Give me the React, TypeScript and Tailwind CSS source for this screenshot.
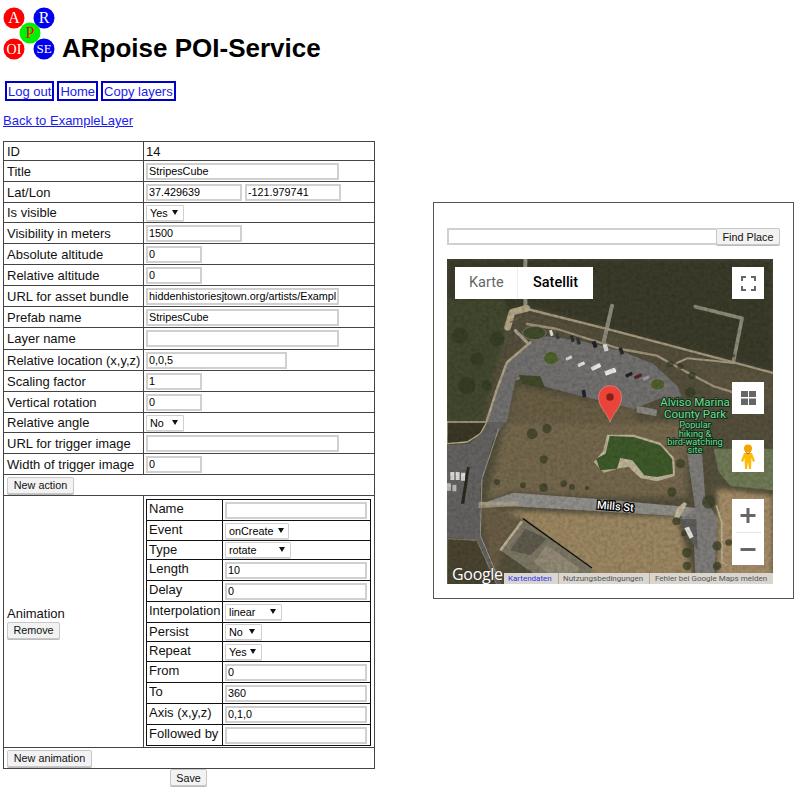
import type { ReactNode } from 'react'

const font = 'font-["Liberation_Sans",Arial,sans-serif]'

function Logo() {
  const balls = [
    { cx: 14, cy: 16, fill: '#ff0000', text: 'A', color: '#fff', size: 16 },
    { cx: 44, cy: 16, fill: '#0000ee', text: 'R', color: '#fff', size: 16 },
    { cx: 14, cy: 47, fill: '#ff0000', text: 'OI', color: '#fff', size: 14 },
    { cx: 44, cy: 47, fill: '#0000ee', text: 'SE', color: '#fff', size: 13 },
    { cx: 30, cy: 31, fill: '#00f000', text: 'P', color: '#ff0000', size: 16 },
  ]
  return (
    <svg width="61" height="60" viewBox="0 0 61 60" className="shrink-0">
      {balls.map((b) => (
        <g key={b.text}>
          <circle cx={b.cx} cy={b.cy} r="10.5" fill={b.fill} />
          <text
            x={b.cx}
            y={b.cy + b.size * 0.34}
            textAnchor="middle"
            fontSize={b.size}
            fill={b.color}
            fontFamily="'Liberation Serif', serif"
          >
            {b.text}
          </text>
        </g>
      ))}
    </svg>
  )
}

function NavBox({ label }: { label: string }) {
  return (
    <a className="h-[20px] border-2 border-[#0000cc] px-[1px] text-[13px] leading-[17px] text-[#1a1aee]">
      {label}
    </a>
  )
}

function Field({ value = '', w }: { value?: string; w: string }) {
  return (
    <input
      readOnly
      value={value}
      className={`box-border block h-[17px] border-2 border-[#d0d0d0] bg-white px-[1px] text-[10.8px] leading-[13px] text-black outline-none ${w}`}
    />
  )
}

function Sel({ value, w, arrow }: { value: string; w: string; arrow: string }) {
  return (
    <span className={`relative box-border block h-[16px] rounded-[1px] border border-[#cfcfcf] bg-white px-[3px] text-[10.8px] leading-[14px] text-black shadow-[0_1px_0_#ddd] ${w}`}>
      {value}
      <svg width="6" height="5" viewBox="0 0 6 5" className={`absolute top-[4px] ${arrow}`}>
        <path d="M0 0h6L3 5z" fill="#111" />
      </svg>
    </span>
  )
}

function Btn({ label, className = '' }: { label: string; className?: string }) {
  return (
    <button className={`box-border block h-[17px] rounded-[2px] border border-[#c8c8c8] bg-[#f2f2f2] text-[10.8px] leading-[14px] text-[#111] shadow-[0_1px_0_#bbb] ${className}`}>
      {label}
    </button>
  )
}

const mainRows: { label: string; h: string; cell: ReactNode }[] = [
  { label: 'ID', h: 'h-[19px]', cell: '14' },
  { label: 'Title', h: 'h-[21px]', cell: <Field value="StripesCube" w="w-[193px]" /> },
  {
    label: 'Lat/Lon',
    h: 'h-[21px]',
    cell: (
      <div className="flex gap-[3px]">
        <Field value="37.429639" w="w-[96px]" />
        <Field value="-121.979741" w="w-[96px]" />
      </div>
    ),
  },
  { label: 'Is visible', h: 'h-[20px]', cell: <Sel value="Yes" w="w-[38px]" arrow="right-[5px]" /> },
  { label: 'Visibility in meters', h: 'h-[21px]', cell: <Field value="1500" w="w-[96px]" /> },
  { label: 'Absolute altitude', h: 'h-[21px]', cell: <Field value="0" w="w-[56px]" /> },
  { label: 'Relative altitude', h: 'h-[21px]', cell: <Field value="0" w="w-[56px]" /> },
  { label: 'URL for asset bundle', h: 'h-[21px]', cell: <Field value="hiddenhistoriesjtown.org/artists/ExampleLayer/stripes" w="w-[193px]" /> },
  { label: 'Prefab name', h: 'h-[21px]', cell: <Field value="StripesCube" w="w-[193px]" /> },
  { label: 'Layer name', h: 'h-[22px]', cell: <Field w="w-[193px]" /> },
  { label: 'Relative location (x,y,z)', h: 'h-[21px]', cell: <Field value="0,0,5" w="w-[141px]" /> },
  { label: 'Scaling factor', h: 'h-[21px]', cell: <Field value="1" w="w-[56px]" /> },
  { label: 'Vertical rotation', h: 'h-[21px]', cell: <Field value="0" w="w-[56px]" /> },
  { label: 'Relative angle', h: 'h-[20px]', cell: <Sel value="No" w="w-[38px]" arrow="right-[5px]" /> },
  { label: 'URL for trigger image', h: 'h-[21px]', cell: <Field w="w-[193px]" /> },
  { label: 'Width of trigger image', h: 'h-[21px]', cell: <Field value="0" w="w-[56px]" /> },
]

const animRows: { label: string; h: string; cell: ReactNode }[] = [
  { label: 'Name', h: 'h-[21px]', cell: <Field w="w-[142px]" /> },
  { label: 'Event', h: 'h-[20px]', cell: <Sel value="onCreate" w="w-[64px]" arrow="right-[4px]" /> },
  { label: 'Type', h: 'h-[19px]', cell: <Sel value="rotate" w="w-[66px]" arrow="right-[5px]" /> },
  { label: 'Length', h: 'h-[21px]', cell: <Field value="10" w="w-[142px]" /> },
  { label: 'Delay', h: 'h-[21px]', cell: <Field value="0" w="w-[142px]" /> },
  { label: 'Interpolation', h: 'h-[21px]', cell: <Sel value="linear" w="w-[57px]" arrow="right-[5px]" /> },
  { label: 'Persist', h: 'h-[19px]', cell: <Sel value="No" w="w-[37px]" arrow="right-[6px]" /> },
  { label: 'Repeat', h: 'h-[20px]', cell: <Sel value="Yes" w="w-[37px]" arrow="right-[5px]" /> },
  { label: 'From', h: 'h-[21px]', cell: <Field value="0" w="w-[142px]" /> },
  { label: 'To', h: 'h-[21px]', cell: <Field value="360" w="w-[142px]" /> },
  { label: 'Axis (x,y,z)', h: 'h-[21px]', cell: <Field value="0,1,0" w="w-[142px]" /> },
  { label: 'Followed by', h: 'h-[21px]', cell: <Field w="w-[142px]" /> },
]

function AnimationTable() {
  return (
    <table className="w-[225px] table-fixed border-collapse border border-[#111] text-[13px] leading-[17px]">
      <colgroup>
        <col className="w-[76px]" />
        <col />
      </colgroup>
      <tbody>
        {animRows.map((r) => (
          <tr key={r.label}>
            <td className={`${r.h} whitespace-nowrap border border-[#111] px-[2px] py-0 align-top`}>{r.label}</td>
            <td className="border border-[#111] px-[2px] py-0">{r.cell}</td>
          </tr>
        ))}
      </tbody>
    </table>
  )
}

function PoiTable() {
  return (
    <table className="ml-[3px] mt-[12px] w-[372px] table-fixed border-collapse border border-[#333] text-[13px] leading-[17px] text-[#111]">
      <colgroup>
        <col className="w-[140px]" />
        <col />
      </colgroup>
      <tbody>
        {mainRows.map((r) => (
          <tr key={r.label}>
            <td className={`${r.h} whitespace-nowrap border border-[#444] px-[3px] py-0`}>{r.label}</td>
            <td className="border border-[#444] px-[2px] py-0">{r.cell}</td>
          </tr>
        ))}
        <tr>
          <td colSpan={2} className="h-[21px] border border-[#444] px-[3px] py-0">
            <Btn label="New action" className="w-[67px]" />
          </td>
        </tr>
        <tr>
          <td className="border border-[#444] px-[3px] py-0">
            Animation
            <Btn label="Remove" className="w-[53px]" />
          </td>
          <td className="border border-[#444] px-[2px] pb-[1px] pt-[3px]">
            <AnimationTable />
          </td>
        </tr>
        <tr>
          <td colSpan={2} className="h-[21px] border border-[#444] px-[3px] py-0">
            <Btn label="New animation" className="w-[85px]" />
          </td>
        </tr>
      </tbody>
    </table>
  )
}

const cars: [number, number, number, number, number, string][] = [
  [313, 222, 9, 18, -20, '#e4e4e0'], [331, 231, 9, 18, -20, '#3a3a3a'], [376, 239, 10, 20, -15, '#2e2e33'],
  [394, 246, 10, 22, -15, '#33333a'], [443, 256, 12, 20, -20, '#1f1f22'], [476, 266, 13, 22, -15, '#d8d8d4'],
  [523, 276, 11, 22, -20, '#2a2a2e'], [366, 297, 9, 20, 65, '#d8d8d4'], [403, 316, 10, 22, 65, '#e0e0dc'],
  [447, 324, 12, 30, 65, '#e8e8e4'], [490, 338, 14, 34, 70, '#eeeeea'], [546, 347, 10, 22, 65, '#222226'],
  [573, 352, 10, 24, 65, '#5d2328'], [598, 357, 9, 20, 65, '#9a9a98'], [411, 404, 11, 22, -10, '#1e2230'],
]

const topTrees: [number, number, number][] = [
  [670, 315, 10], [700, 322, 9], [735, 350, 11], [860, 290, 5], [150, 240, 22], [90, 300, 20], [120, 380, 16],
  [40, 230, 24], [60, 380, 26], [190, 130, 14], [730, 400, 16],
]

const bottomTrees: [number, number, number][] = [
  [785, 240, 20], [688, 298, 12], [720, 392, 15], [720, 432, 13], [810, 372, 14], [810, 432, 13],
  [845, 362, 10], [290, 197, 13], [375, 195, 9], [350, 185, 10], [420, 198, 7], [228, 190, 9],
  [675, 210, 14], [700, 125, 14], [290, 112, 12], [255, 35, 16], [300, 20, 14], [150, 180, 9], [710, 335, 8],
]

function SatelliteImage() {
  return (
    <svg viewBox="0 0 326 325" className="absolute inset-0 size-full">
      <defs>
        <filter id="grain" x="0" y="0" width="100%" height="100%">
          <feTurbulence type="fractalNoise" baseFrequency="0.28" numOctaves="3" seed="11" />
          <feColorMatrix values="0 0 0 0 0  0 0 0 0 0  0 0 0 0 0  0.9 0.9 0 0 -0.66" />
        </filter>
        <filter id="soft">
          <feGaussianBlur stdDeviation="1.6" />
        </filter>
        <filter id="softer">
          <feGaussianBlur stdDeviation="8" />
        </filter>
      </defs>

      <rect width="326" height="325" fill="#55503c" />

      {/* top half, drawn in the 978 wide coordinates of the crop */}
      <g transform="scale(0.33333)">
        <g filter="url(#softer)">
          <path d="M0 0H978V340L500 215 240 145 180 170 130 120 0 120Z" fill="#3b3a2a" />
          <path d="M0 120H180L170 240 130 380 110 489H0Z" fill="#43482f" />
          <path d="M210 385 560 450 570 489H180Z" fill="#6b5f45" />
          <path d="M720 300 978 345V440L800 400Z" fill="#5b5540" />
        </g>
        <path d="M250 245 300 232 400 245 520 275 620 315 690 380 705 412 640 418 560 450 440 420 300 385 240 350 205 365 180 489 118 489 150 390 175 310Z" fill="#727170" filter="url(#soft)" />
        <g fill="none" strokeLinecap="round" strokeLinejoin="round" filter="url(#soft)">
          <path d="M235 0V145" stroke="#8f8f80" strokeWidth="12" />
          <path d="M495 140 470 250" stroke="#8d8a7d" strokeWidth="12" />
          <path d="M745 143 885 178 860 305" stroke="#8d8a78" strokeWidth="11" />
          <path d="M240 150 500 215 860 310 978 342" stroke="#a59a7e" strokeWidth="7" />
          <path d="M240 195 330 210 520 270 630 290 720 340 800 382 860 400" stroke="#a0947a" strokeWidth="7" />
          <path d="M690 312 720 298 800 305 860 312" stroke="#a69a80" strokeWidth="6" />
          <path d="M250 250 180 310 150 390 118 489" stroke="#b0a486" strokeWidth="7" />
          <path d="M210 360 240 350 290 380" stroke="#8f8468" strokeWidth="5" />
          <path d="M182 205 195 160 240 148" stroke="#b4a586" strokeWidth="20" />
          <path d="M205 215 240 250" stroke="#a8a090" strokeWidth="10" />
          <path d="M190 190 225 172" stroke="#66604e" strokeWidth="3" />
        </g>
        <ellipse cx="262" cy="222" rx="35" ry="20" fill="#414b2c" stroke="#8f8a74" strokeWidth="2" />
        <ellipse cx="312" cy="298" rx="22" ry="20" fill="#50602f" stroke="#83836e" strokeWidth="2" />
        <ellipse cx="632" cy="376" rx="22" ry="17" fill="#50602f" stroke="#918a72" strokeWidth="2" />
        <path d="M215 348 280 352 295 388 225 375Z" fill="#424a2c" filter="url(#soft)" />
        <path d="M570 440 630 452 628 472 568 460Z" fill="#8a8a84" />
        {topTrees.map(([cx, cy, r], i) => (
          <circle key={i} cx={cx} cy={cy} r={r} fill="#333a24" opacity="0.7" filter="url(#soft)" />
        ))}
        {cars.map(([x, y, w, h, rot, c], i) => (
          <rect key={i} x={x - w / 2} y={y - h / 2} width={w} height={h} rx="2" fill={c} transform={`rotate(${rot} ${x} ${y})`} />
        ))}
      </g>

      {/* bottom half, same scale, moved down by half the map */}
      <g transform="translate(0 163) scale(0.33333)">
        <g filter="url(#softer)">
          <path d="M175 0H720V225L460 225 200 210 120 235Z" fill="#74684e" />
          <path d="M160 265 690 285 745 489H430L230 295Z" fill="#9c8762" />
          <path d="M810 200 978 220V489H810Z" fill="#a48c68" />
          <path d="M100 240 160 260 230 290 160 385 150 489 120 380Z" fill="#6a5d44" />
        </g>
        <path d="M800 80 978 80V205L850 192 815 150Z" fill="#6f7a57" filter="url(#soft)" />
        <path d="M0 0H120L100 35 60 60 0 65Z" fill="#3b3827" stroke="#b8ac8e" strokeWidth="4" />
        <path d="M120 0 175 0 135 60 100 200 100 340 130 420 165 489 120 489 90 355 0 345V70L70 65 115 20Z" fill="#656462" filter="url(#soft)" />
        <path d="M155 20 105 170 100 340 150 460" fill="none" stroke="#9a9890" strokeWidth="3" />
        <path d="M0 350 90 355 150 489H0Z" fill="#4a4530" stroke="#8a8068" strokeWidth="3" />
        <path d="M95 248 200 212 460 232 690 252 770 260 770 292 690 282 460 268 220 254Z" fill="#908f8a" filter="url(#soft)" />
        <path d="M95 240 215 238 215 252 95 258Z" fill="#aba08a" opacity="0.8" />
        <path d="M690 258 712 240 720 245 695 290 682 285Z" fill="#c2b89c" />
        <path d="M720 90 765 90 775 230 812 290 800 489 745 489 740 330 700 290 745 262 730 160Z" fill="#7e7d7a" filter="url(#soft)" />
        <path d="M700 290 748 292 752 385 720 340Z" fill="#5f5e5c" />
        <path d="M808 250 824 300 825 420 840 430" fill="none" stroke="#bdb093" strokeWidth="5" />
        <path d="M480 38 560 38 640 62 682 108 684 162 630 178 580 168 545 135 520 138 470 152 440 120 468 88Z" fill="#bdb399" filter="url(#soft)" />
        <path d="M488 42 560 45 640 70 675 110 678 155 630 165 592 160 556 115 520 108 510 140 460 145 447 110 476 95Z" fill="#3f5a2a" />
        <path d="M228 290 435 438 420 489 310 489 160 385Z" fill="#7d7765" />
        <path d="M235 320 300 350 250 400 190 385Z" fill="#5f5b4c" />
        <path d="M300 370 400 440 340 480 260 420Z" fill="#938b76" />
        <path d="M160 385 225 298" stroke="#b9ae90" strokeWidth="8" fill="none" />
        <path d="M228 290 435 438" stroke="#14120e" strokeWidth="4" fill="none" />
        <path d="M60 135 68 135 52 245 42 245Z" fill="#2a2a1e" />
        <path d="M10 150h12v24H10zM26 150h12v24H26zM42 152h12v24H42z" fill="#dcdcdc" />
        <path d="M0 184h12v22H0zM16 188h12v20H16z" fill="#bcbcbc" />
        <path d="M712 318 726 314 740 344 728 350Z" fill="#e4e4e0" />
        {bottomTrees.map(([cx, cy, r], i) => (
          <circle key={i} cx={cx} cy={cy} r={r} fill="#3b3f28" opacity="0.75" filter="url(#soft)" />
        ))}
      </g>

      <rect width="326" height="325" filter="url(#grain)" opacity="0.22" />

      {/* map labels */}
      <g fontFamily="Roboto, 'Liberation Sans', sans-serif" textAnchor="middle" fill="#74d994" stroke="#10301a" strokeWidth="2" style={{ paintOrder: 'stroke' }}>
        <text x="248" y="146.500" fontSize="11.5">Alviso Marina</text>
        <text x="248" y="158.500" fontSize="11.5">County Park</text>
        <text x="248" y="169" fontSize="9.2">Popular</text>
        <text x="248" y="177.500" fontSize="9.2">hiking &amp;</text>
        <text x="248" y="185.500" fontSize="9.2">bird-watching</text>
        <text x="248" y="194" fontSize="9.2">site</text>
      </g>
      <text x="168" y="251" transform="rotate(5 168 251)" fontFamily="Roboto, 'Liberation Sans', sans-serif" fontSize="11" fontWeight="500" textAnchor="middle" fill="#fff" stroke="#000" strokeWidth="2.5" style={{ paintOrder: 'stroke' }}>
        Mills St
      </text>

      {/* pin */}
      <path d="M163 163C160 153 151.500 149 151.500 138A11.500 11.500 0 0 1 174.500 138C174.500 149 166 153 163 163Z" fill="#e9443a" stroke="#f2a59f" strokeWidth="0.5" />
      <circle cx="163" cy="138" r="3.800" fill="#8a1e18" />
    </svg>
  )
}

function MapView() {
  return (
    <div className="relative mt-[14px] h-[325px] w-[326px] overflow-hidden">
      <SatelliteImage />

      <div className="absolute left-[8px] top-[8px] flex h-[32px] w-[138px] bg-white font-['Roboto',sans-serif] text-[14.5px] leading-[32px]">
        <span className="w-[63px] border-r border-[#eee] pl-[14px] text-[#666]">Karte</span>
        <span className="pl-[15px] font-medium text-black">Satellit</span>
      </div>

      <div className="absolute left-[285px] top-[8px] flex size-[32px] items-center justify-center bg-white">
        <svg width="15" height="15" viewBox="0 0 15 15" fill="none" stroke="#666" strokeWidth="2">
          <path d="M1 5V1h4M10 1h4v4M14 10v4h-4M5 14H1v-4" />
        </svg>
      </div>

      <div className="absolute left-[285px] top-[123px] flex size-[32px] items-center justify-center bg-white">
        <svg width="15" height="14" viewBox="0 0 15 14" fill="#666">
          <path d="M0 0h7v6H0zM8 0h7v6H8zM0 7.500h7V14H0zM8 7.500h7V14H8z" />
        </svg>
      </div>

      <div className="absolute left-[285px] top-[181px] flex size-[32px] items-center justify-center bg-white">
        <svg width="14" height="25" viewBox="0 0 14 25">
          <circle cx="7" cy="4.500" r="4" fill="#f5a300" />
          <path d="M3 9h8l3 8-2 1-1.500-4-.5 11H8l-1-7-1 7H4L3.500 14 2 18l-2-1z" fill="#fbbc04" />
          <path d="M4.500 8 7 10l2.500-2" fill="none" stroke="#c2410c" strokeWidth="0.8" />
        </svg>
      </div>

      <div className="absolute left-[285px] top-[240px] flex h-[66px] w-[32px] flex-col items-center bg-white">
        <svg width="16" height="33" viewBox="0 0 16 33" fill="#666">
          <path d="M6.500 9h3v6h6v3h-6v6h-3v-6h-6v-3h6z" />
        </svg>
        <div className="h-px w-[25px] bg-[#e6e6e6]" />
        <svg width="16" height="32" viewBox="0 0 16 32" fill="#666">
          <path d="M.5 15h15v3H.5z" />
        </svg>
      </div>

      <span className="absolute left-[5px] top-[305px] font-['Open_Sans',sans-serif] text-[16px] leading-[20px] tracking-[-0.3px] text-white [text-shadow:0_0_2px_#333]">
        Google
      </span>

      <div className="absolute bottom-0 right-0 flex h-[11px] w-[269px] items-center bg-[#d9d6cf] font-['Roboto',sans-serif] text-[8px] leading-[11px] text-[#555]">
        <span className="w-[55px] border-r border-[#aaa] pl-[4px] text-[#3333ee]">Kartendaten</span>
        <span className="w-[91px] border-r border-[#aaa] pl-[4px]">Nutzungsbedingungen</span>
        <span className="pl-[5px]">Fehler bei Google Maps melden</span>
      </div>
    </div>
  )
}

export default function App() {
  return (
    <div className={`${font} flex h-[798px] w-[800px] items-start overflow-hidden bg-white text-black`}>
      <div className="w-[433px] shrink-0">
        <div className="flex h-[62px] items-end">
          <Logo />
          <h1 className="mb-[-1px] ml-[1px] text-[26px] font-bold leading-[30px]">ARpoise POI-Service</h1>
        </div>
        <div className="mt-[19px] flex gap-[3px] pl-[5px]">
          <NavBox label="Log out" />
          <NavBox label="Home" />
          <NavBox label="Copy layers" />
        </div>
        <a className="ml-[3px] mt-[11px] block text-[13px] leading-[17px] text-[#1a1aee] underline">Back to ExampleLayer</a>
        <PoiTable />
        <Btn label="Save" className="ml-[170px] w-[37px]" />
      </div>

      <div className="mt-[202px] box-border h-[397px] w-[361px] border border-[#555] px-[13px] pt-[25px]">
        <div className="flex h-[17px] w-[333px]">
          <input readOnly className="box-border h-[17px] w-[269px] border-2 border-r-0 border-[#d0d0d0] bg-white outline-none" />
          <Btn label="Find Place" className="w-[64px]" />
        </div>
        <MapView />
      </div>
    </div>
  )
}
